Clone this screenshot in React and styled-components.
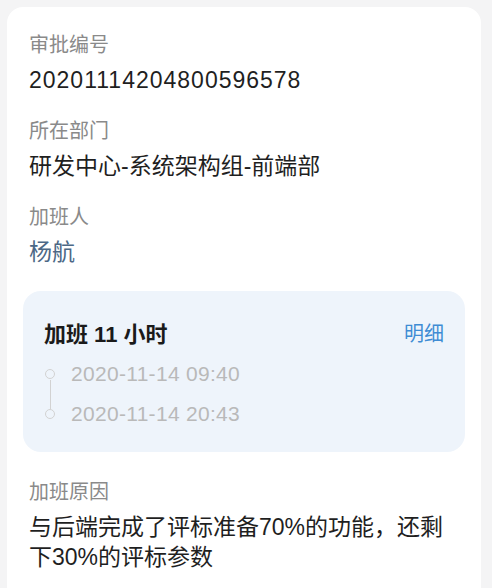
import styled, { createGlobalStyle } from "styled-components";

const GlobalStyle = createGlobalStyle`
    body {
        margin: 0;
        background-color: #f4f4f5;
        font-family: "Liberation Sans", "Noto Sans CJK SC", sans-serif;
    }
`

const Pagina = styled.main`
    padding: 7px 11px 0 7px;
    height: 588px;
    box-sizing: border-box;
    overflow: hidden;
`

const Cartao = styled.section`
    background-color: #fff;
    border-radius: 16px;
    padding: 24px 22px 40px 22px;
    display: flex;
    flex-direction: column;
`

const Campo = styled.div`
    display: flex;
    flex-direction: column;
    gap: 6px;
    margin-bottom: ${({$espaco}) => $espaco ?? 22}px;
`

const Rotulo = styled.span`
    font-size: 20px;
    line-height: 28px;
    color: #8a8a8a;
`

const Valor = styled.span`
    font-size: 23px;
    line-height: 30px;
    color: ${({$cor}) => $cor || '#1f1f1f'};
    letter-spacing: ${({$espacado}) => ($espacado ? '1px' : '0')};
`

const Resumo = styled.div`
    background-color: #eef4fb;
    border-radius: 18px;
    margin: 0 -6px 26px -6px;
    padding: 26px 21px 23px 21px;
    display: flex;
    flex-direction: column;
`

const ResumoTopo = styled.header`
    display: flex;
    justify-content: space-between;
    align-items: center;
    height: 30px;
    margin-bottom: 12px;
`

const ResumoTitulo = styled.h3`
    margin: 0;
    font-size: 22px;
    font-weight: 700;
    color: #1a1a1a;
`

const Detalhe = styled.button`
    background: transparent;
    border: none;
    padding: 0;
    font-family: inherit;
    font-size: 20px;
    color: #3f8cd4;
    cursor: pointer;
`

const Linha = styled.ol`
    list-style: none;
    margin: 0;
    padding: 0;
    display: flex;
    flex-direction: column;
    gap: 10px;
`

const Ponto = styled.li`
    display: flex;
    align-items: center;
    gap: 16px;
    height: 30px;
    position: relative;
    font-size: 21px;
    letter-spacing: 0.3px;
    color: #b9b9b9;

    &::before {
        content: "";
        width: 8px;
        height: 8px;
        margin-left: 1px;
        border-radius: 50%;
        border: 1.5px solid #d2d2d2;
        flex-shrink: 0;
    }

    &:first-child::after {
        content: "";
        position: absolute;
        left: 5.5px;
        top: 21px;
        height: 29px;
        width: 1.5px;
        background-color: #d2d2d2;
    }
`

export default function App() {
    const campos = [
        { rotulo: '审批编号', valor: '20201114204800596578', espacado: true },
        { rotulo: '所在部门', valor: '研发中心-系统架构组-前端部' },
        { rotulo: '加班人', valor: '杨航', cor: '#4c6886', espaco: 24 },
    ]

    return (
        <>
            <GlobalStyle />
            <Pagina>
                <Cartao>
                    {campos.map((campo) => (
                        <Campo key={campo.rotulo} $espaco={campo.espaco}>
                            <Rotulo>{campo.rotulo}</Rotulo>
                            <Valor $cor={campo.cor} $espacado={campo.espacado}>{campo.valor}</Valor>
                        </Campo>
                    ))}
                    <Resumo>
                        <ResumoTopo>
                            <ResumoTitulo>加班 11 小时</ResumoTitulo>
                            <Detalhe>明细</Detalhe>
                        </ResumoTopo>
                        <Linha>
                            <Ponto>2020-11-14 09:40</Ponto>
                            <Ponto>2020-11-14 20:43</Ponto>
                        </Linha>
                    </Resumo>
                    <Campo>
                        <Rotulo>加班原因</Rotulo>
                        <Valor>与后端完成了评标准备70%的功能，还剩下30%的评标参数</Valor>
                    </Campo>
                </Cartao>
            </Pagina>
        </>
    )
}
